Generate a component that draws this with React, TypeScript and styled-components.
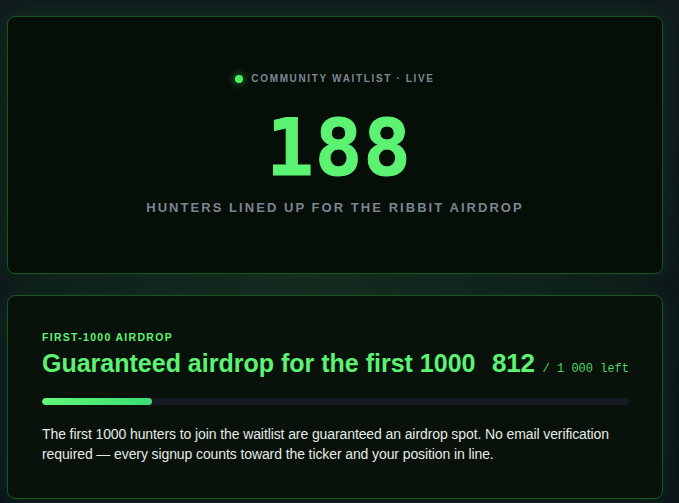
import React from 'react';
import styled, { createGlobalStyle } from 'styled-components';

const TOTAL_SPOTS = 1000;
const JOINED = 188;

const GlobalStyle = createGlobalStyle`
  html,
  body {
    margin: 0;
    padding: 0;
    min-height: 100%;
    background: #0c1517;
  }
  body {
    font-family: 'Liberation Sans', Arial, sans-serif;
    color: #e6ece8;
  }
`;

export default function App() {
  const left = TOTAL_SPOTS - JOINED;
  const filled = (JOINED / TOTAL_SPOTS) * 100;

  return (
    <>
      <GlobalStyle />
      <Page>
        <Column>
          <CounterCard>
            <LiveLabel>
              <LiveDot />
              Community waitlist · Live
            </LiveLabel>
            <BigNumber>{JOINED}</BigNumber>
            <Caption>Hunters lined up for the Ribbit airdrop</Caption>
          </CounterCard>

          <AirdropCard>
            <Eyebrow>First-1000 airdrop</Eyebrow>
            <HeadRow>
              <Heading>Guaranteed airdrop for the first 1000</Heading>
              <Remaining>
                <RemainingCount>{left}</RemainingCount>
                <RemainingOf>/ 1 000 left</RemainingOf>
              </Remaining>
            </HeadRow>
            <Track>
              <Fill style={{ width: `${filled}%` }} />
            </Track>
            <Body>
              The first 1000 hunters to join the waitlist are guaranteed an airdrop spot. No email
              verification required — every signup counts toward the ticker and your position in
              line.
            </Body>
          </AirdropCard>
        </Column>
      </Page>
    </>
  );
}

const Page = styled.div`
  min-height: 503px;
  box-sizing: border-box;
  padding: 16px 16px 0 7px;
  background:
    radial-gradient(ellipse 70% 60% at 45% 55%, #15261f 0%, rgba(21, 38, 31, 0) 70%),
    linear-gradient(180deg, #101b1c 0%, #0c1418 100%);
`;

const Column = styled.div`
  width: 656px;
  display: flex;
  flex-direction: column;
  gap: 21px;
`;

const Card = styled.section`
  box-sizing: border-box;
  border: 1px solid #17561f;
  border-radius: 8px;
  box-shadow: 0 0 22px rgba(40, 190, 80, 0.13);
`;

const CounterCard = styled(Card)`
  height: 258px;
  padding: 56px 20px 0;
  display: flex;
  flex-direction: column;
  align-items: center;
  background: #060e08;
`;

const LiveLabel = styled.div`
  display: flex;
  align-items: center;
  gap: 8px;
  font-size: 10px;
  line-height: 12px;
  font-weight: 700;
  letter-spacing: 1.65px;
  text-transform: uppercase;
  color: #7c8792;
`;

const LiveDot = styled.span`
  width: 8px;
  height: 8px;
  border-radius: 50%;
  background: #4ef063;
  box-shadow: 0 0 8px rgba(78, 240, 99, 0.7);
`;

const BigNumber = styled.div`
  margin: 23px 0 0 8px;
  font-family: 'DejaVu Sans Mono', 'Liberation Mono', monospace;
  font-size: 79px;
  line-height: 80px;
  font-weight: 700;
  letter-spacing: 1px;
  color: #5cf373;
  -webkit-text-stroke: 1px #5cf373;
`;

const Caption = styled.div`
  margin-top: 12px;
  font-size: 13px;
  line-height: 16px;
  font-weight: 700;
  letter-spacing: 2.05px;
  text-transform: uppercase;
  color: #7a8591;
`;

const AirdropCard = styled(Card)`
  padding: 34px 33px 34px 34px;
  background: #09110b;
`;

const Eyebrow = styled.div`
  font-size: 10.5px;
  line-height: 14px;
  font-weight: 700;
  letter-spacing: 1.3px;
  text-transform: uppercase;
  color: #5cf373;
`;

const HeadRow = styled.div`
  margin-top: 4px;
  display: flex;
  align-items: baseline;
  justify-content: space-between;
  gap: 16px;
`;

const Heading = styled.h2`
  margin: 0;
  font-size: 25px;
  line-height: 30px;
  font-weight: 700;
  letter-spacing: 0px;
  color: #5cf373;
`;

const Remaining = styled.div`
  display: flex;
  align-items: baseline;
  gap: 8px;
  white-space: nowrap;
`;

const RemainingCount = styled.span`
  font-size: 26px;
  font-weight: 700;
  letter-spacing: -0.3px;
  color: #5cf373;
`;

const RemainingOf = styled.span`
  font-family: 'Liberation Mono', 'DejaVu Sans Mono', monospace;
  font-size: 12px;
  color: #4fd468;
`;

const Track = styled.div`
  margin-top: 19px;
  height: 7px;
  border-radius: 4px;
  background: #161a22;
  overflow: hidden;
`;

const Fill = styled.div`
  height: 100%;
  border-radius: 4px;
  background: linear-gradient(90deg, #62f878 0%, #3bdd75 100%);
`;

const Body = styled.p`
  margin: 19px 0 0;
  font-size: 14px;
  line-height: 20px;
  letter-spacing: -0.1px;
  color: #e4ebe6;
`;
